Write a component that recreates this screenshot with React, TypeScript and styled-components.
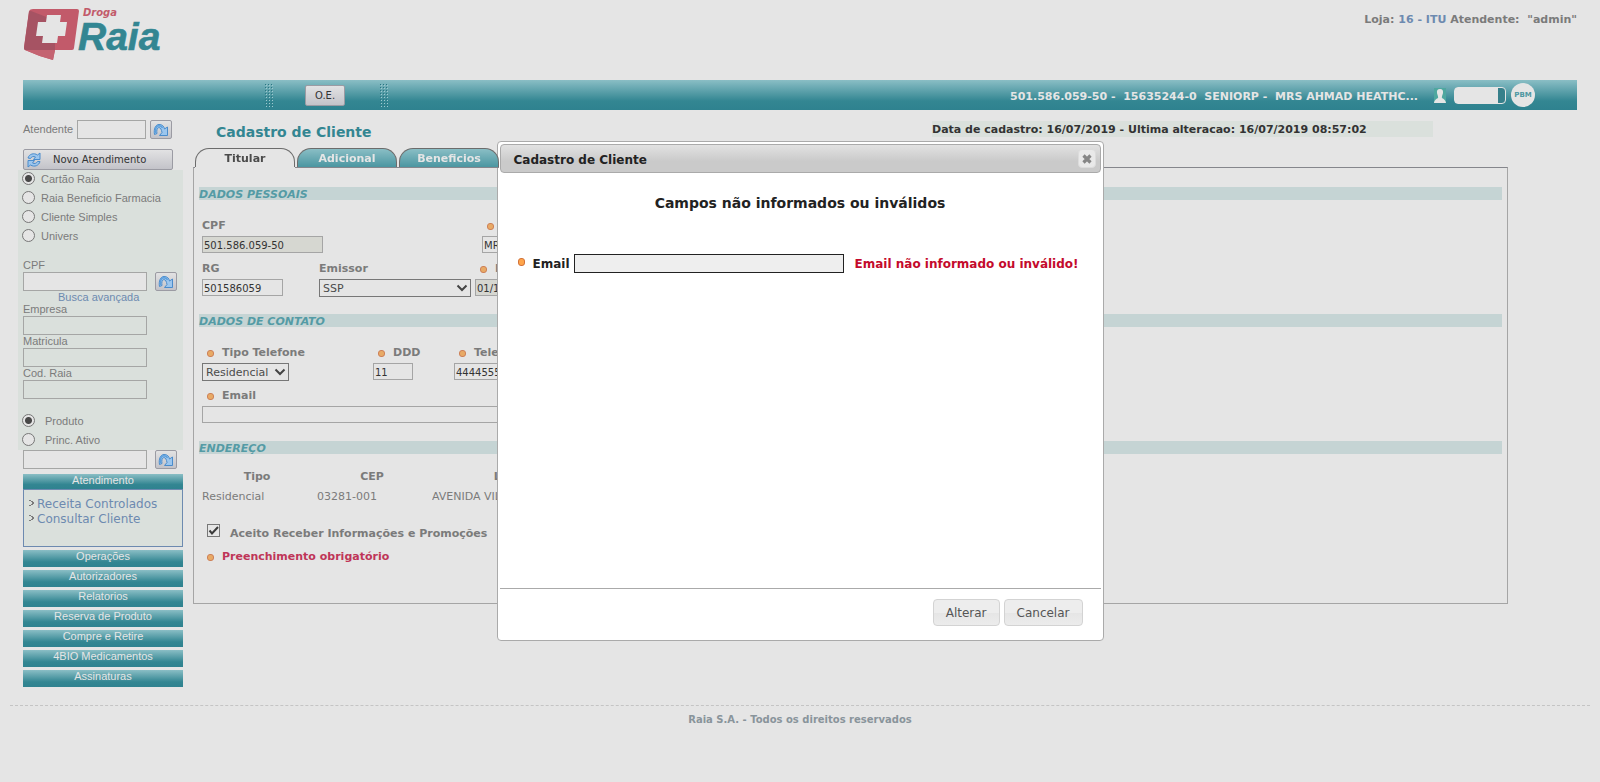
import React from "react";
import styled, { createGlobalStyle, css } from "styled-components";

const verdana = `Verdana, "DejaVu Sans", sans-serif`;
const arial = `"Liberation Sans", Arial, sans-serif`;
const tealGradient = "linear-gradient(#8abec5 0%, #338692 70%, #2f828f 100%)";
const buttonGradient = "linear-gradient(#e2e2e3, #c3c3c9)";

const GlobalStyle = createGlobalStyle`
  *, *::before, *::after { box-sizing: border-box; }
  body {
    margin: 0;
    background: #e5e5e5;
    color: #7b7b7b;
    font-family: ${verdana};
    font-size: 11px;
  }
  input, select, button { font-family: ${verdana}; margin: 0; border-radius: 0; }
  a { color: #6d8ab0; text-decoration: none; }
`;

/* ---------- header ---------- */

const Page = styled.div`
  display: flex;
  flex-direction: column;
`;

const Header = styled.header`
  display: flex;
  justify-content: space-between;
  align-items: flex-start;
  height: 80px;
  padding: 7px 23px 0;
`;

const StoreInfo = styled.p`
  margin: 0;
  padding-top: 6px;
  font-weight: bold;
  line-height: 14px;
  white-space: pre;
`;

const Toolbar = styled.div`
  display: flex;
  align-items: center;
  height: 30px;
  margin: 0 23px;
  padding: 0 42px 0 242px;
  background: ${tealGradient};
`;

const ToolButton = styled.button`
  width: 40px;
  height: 21px;
  margin: 0 35px 0 32px;
  padding: 0;
  border: 1px solid #9b9ba3;
  border-radius: 2px;
  background: ${buttonGradient};
  color: #333;
  font-size: 10px;
`;

const ToolStatus = styled.div`
  display: flex;
  align-items: center;
  margin-left: auto;
  color: #e5e5e5;
  font-weight: bold;
  white-space: pre;

  span { padding: 3px 16px 0 0; }
`;

const Meter = styled.div`
  width: 52px;
  height: 17px;
  margin: 0 5px 0 8px;
  border: 1px solid #e5e5e5;
  border-radius: 4px;
  background: linear-gradient(90deg, #e5e5e5 0 43px, #37808b 43px);
`;

const PbmBadge = styled.div`
  display: flex;
  align-items: center;
  justify-content: center;
  width: 24px;
  height: 24px;
  border-radius: 50%;
  background: #e5e5e5;
  color: #4f97a1;
  font-size: 7px;
`;

/* ---------- sidebar ---------- */

const Body = styled.div`
  display: flex;
  align-items: flex-start;
  gap: 10px;
  padding: 0 92px 0 18px;
`;

const Sidebar = styled.aside`
  flex: none;
  width: 165px;
  padding-top: 10px;
  font-family: ${arial};
`;

const SideRow = styled.div<{ $gap: number }>`
  display: flex;
  align-items: center;
  gap: ${(p) => p.$gap}px;
  padding-left: 5px;
`;

const SideLabel = styled.label`
  display: block;
  padding-left: 5px;
  line-height: 13px;
`;

const AttendantLabel = styled.label`
  width: 50px;
  line-height: 13px;
`;

const SideInput = styled.input<{ $width?: number; $clear?: boolean }>`
  display: block;
  width: ${(p) => p.$width ?? 124}px;
  height: 19px;
  padding: 0 3px;
  border: 1px solid #a5a6a5;
  background: ${(p) => (p.$clear ? "#e5e5e5" : "transparent")};
  font-size: 10px;
`;

const GoButton = styled.button`
  display: flex;
  align-items: center;
  justify-content: center;
  width: 22px;
  height: 19px;
  padding: 0;
  border: 1px solid #9b9ba3;
  border-radius: 2px;
  background: ${buttonGradient};
`;

const NewButton = styled.button`
  display: flex;
  align-items: center;
  width: 150px;
  height: 21px;
  margin: 10px 0 0 5px;
  padding: 0 0 0 2px;
  border: 1px solid #9b9ba3;
  border-radius: 2px;
  background: ${buttonGradient};
  color: #333;
  font-size: 10px;
  gap: 11px;
`;

const SearchPanel = styled.div`
  display: flex;
  flex-direction: column;
  gap: 13px;
  background: #dae0dc;
`;

const RadioLabel = styled.label<{ $gap: number }>`
  display: flex;
  align-items: center;
  gap: ${(p) => p.$gap}px;
  height: 19px;
  padding: 0 0 2px 4px;
`;

const Radio = styled.input`
  appearance: none;
  width: 13px;
  height: 13px;
  border: 1px solid #777;
  border-radius: 50%;
  background: #e5e5e5;

  &:checked { background: radial-gradient(circle, #484848 0 3px, #e5e5e5 4px); }
`;

const AdvancedLink = styled.a`
  display: block;
  padding-left: 40px;
  line-height: 12px;
`;

const Menu = styled.nav`
  display: flex;
  flex-direction: column;
  gap: 3px;
  padding: 5px 0 0 5px;
`;

const MenuButton = styled.button<{ $open?: boolean }>`
  display: block;
  flex: none;
  width: 100%;
  height: ${(p) => (p.$open ? 15 : 17)}px;
  padding: 0 0 4px;
  border: 0;
  background: ${tealGradient};
  color: #e5e5e5;
  font-family: ${arial};
  font-size: 11px;
  line-height: 13px;
`;

const SubMenu = styled.ul`
  height: 58px;
  margin: 0;
  padding: 7px 0 0 5px;
  border: 1px solid #6d8ab0;
  background: #dae0dc;
  font-family: ${verdana};
  font-size: 12px;
  line-height: 15px;
  list-style: none;

  li { display: flex; align-items: center; gap: 3px; white-space: nowrap; }
  svg { margin-bottom: 3px; }
`;

/* ---------- main form ---------- */

const Main = styled.main`
  flex: 1;
  min-width: 0;
`;

const TitleRow = styled.div`
  display: flex;
  justify-content: space-between;
  height: 38px;
  padding: 11px 75px 0 23px;
`;

const Title = styled.h1`
  margin: 0;
  color: #338692;
  font-size: 14px;
  line-height: 22px;
`;

const Dates = styled.p`
  width: 501px;
  height: 16px;
  margin: 0;
  background: #dae0dc;
  color: #333;
  font-weight: bold;
  line-height: 17px;
  white-space: nowrap;
`;

const Tabs = styled.div`
  display: flex;
  gap: 2px;
  padding-left: 2px;
`;

const Tab = styled.button<{ $active?: boolean }>`
  width: 100px;
  height: 19px;
  padding: 0;
  border: 1px solid #6c6c6c;
  border-bottom: 0;
  border-radius: 14px 14px 0 0;
  background: linear-gradient(#8abec5, #4b96a1);
  color: #e5e5e5;
  font-size: 11px;
  font-weight: bold;
  z-index: 1;
  box-shadow: 0 1px #85868c;

  ${(p) =>
    p.$active &&
    css`
      background: #e5e5e5;
      color: #4b4b4b;
      box-shadow: 0 1px #e5e5e5;
    `}
`;

const Sheet = styled.form`
  padding: 19px 5px 39px;
  border: 1px solid #a5a5a5;
  border-top-color: #85868c;
`;

const SectionTitle = styled.h2`
  height: 13px;
  margin: 0;
  background: #c5d4d4;
  color: #549ba5;
  font-size: 11px;
  font-style: italic;
  line-height: 15px;
`;

const Rows = styled.div`
  display: flex;
  flex-direction: column;
  gap: 8px;
  padding: 19px 3px 17px;
`;

const Row = styled.div<{ $columns: string }>`
  display: grid;
  grid-template-columns: ${(p) => p.$columns};
  min-height: 35px;
`;

const Field = styled.div`
  display: flex;
  flex-direction: column;
  align-items: flex-start;
  gap: 3px;
`;

const FieldLabel = styled.label<{ $required?: boolean }>`
  display: flex;
  align-items: center;
  gap: 8px;
  height: 14px;
  padding-left: ${(p) => (p.$required ? 5 : 0)}px;
  font-weight: bold;
  line-height: 14px;
  white-space: nowrap;
`;

const Dot = styled.span`
  flex: none;
  width: 7px;
  height: 7px;
  border: 1px solid #cd8058;
  border-radius: 3px;
  background: #e8aa66;
`;

const TextInput = styled.input<{ $width: number }>`
  width: ${(p) => p.$width}px;
  height: 17px;
  padding: 1px 1px 0;
  border: 1px solid #a5a5a5;
  background: #e5e5e5;
  color: #333;
  font-size: 10px;

  &:read-only { background: #d6d7d1; }
`;

const SelectBox = styled.div<{ $width: number }>`
  display: grid;
  width: ${(p) => p.$width}px;

  select, svg { grid-area: 1 / 1; }
  svg { justify-self: end; align-self: center; margin-right: 3px; pointer-events: none; }
`;

const Select = styled.select`
  appearance: none;
  width: 100%;
  height: 18px;
  padding: 1px 3px 0;
  border: 1px solid #777;
  background: #e5e5e5;
  color: #4b4b4b;
  font-size: 11px;
`;

const AddressTable = styled.table`
  margin: 13px 0 0 3px;
  border-collapse: collapse;
  table-layout: fixed;
  width: 430px;

  th, td { height: 20px; padding: 0 5px 0 0; line-height: 14px; white-space: nowrap; overflow: hidden; }
  td { text-align: left; }
`;

const ConsentLabel = styled.label`
  display: flex;
  align-items: center;
  gap: 10px;
  height: 16px;
  margin: 15px 0 0 8px;
  font-weight: bold;

  span { padding-top: 6px; }
`;

const Check = styled.input`
  appearance: none;
  width: 13px;
  height: 13px;
  border: 1px solid #777;
`;

const CheckBox = styled.div`
  display: grid;
  width: 13px;

  input, svg { grid-area: 1 / 1; }
  svg { pointer-events: none; }
`;

const RequiredNote = styled.p`
  display: flex;
  align-items: center;
  gap: 8px;
  margin: 12px 0 0 8px;
  color: #bf3558;
  font-weight: bold;
  line-height: 14px;
`;

const Footer = styled.footer`
  margin: 18px 10px 0;
  padding-top: 7px;
  border-top: 1px dashed #c4c4c4;
  color: #89949b;
  font-size: 10px;
  font-weight: bold;
  line-height: 13px;
  text-align: center;
`;

/* ---------- dialog ---------- */

const Overlay = styled.div`
  position: fixed;
  inset: 0;
  display: flex;
  justify-content: center;
  align-items: flex-start;
  padding-top: 141px;
`;

const Dialog = styled.section`
  display: flex;
  flex-direction: column;
  width: 607px;
  min-height: 500px;
  padding: 2px;
  border: 1px solid #aaa;
  border-radius: 4px;
  background: #fff;
  color: #222;
  font-size: 12px;
`;

const DialogBar = styled.header`
  display: flex;
  align-items: center;
  justify-content: space-between;
  height: 29px;
  padding: 0 4px 0 13px;
  border: 1px solid #aaa;
  border-radius: 4px;
  background: linear-gradient(#e2e2e2, #cacaca 60%, #cacaca);

  h2 { margin: 0; padding-top: 2px; font-size: 12px; }
`;

const CloseButton = styled.button`
  display: flex;
  align-items: center;
  justify-content: center;
  width: 18px;
  height: 19px;
  padding: 0;
  border: 1px solid #dcdcdc;
  border-radius: 4px;
  background: #e9e9e9;
`;

const DialogContent = styled.div`
  flex: 1;
  padding: 20px 16px 0;

  h3 { margin: 0 0 41px; font-size: 14px; line-height: 20px; text-align: center; }
`;

const EmailRow = styled.div`
  display: flex;
  align-items: center;
  height: 19px;
  padding-left: 2px;
  font-weight: bold;
  line-height: 14px;
  white-space: nowrap;

  label { padding: 1px 4px 0 8px; }
`;

const BrightDot = styled(Dot)`
  align-self: flex-start;
  margin-top: 4px;
  height: 8px;
  border-color: #d2723a;
  background: #ffa54a;
`;

const EmailInput = styled.input`
  width: 270px;
  height: 19px;
  border: 1px solid #222;
  background: #eee;
`;

const ErrorText = styled.span`
  padding: 1px 0 0 11px;
  color: #c40a2c;
`;

const DialogActions = styled.footer`
  display: flex;
  justify-content: flex-end;
  gap: 4px;
  padding: 10px 18px 12px;
  border-top: 1px solid #aaa;
`;

const DialogButton = styled.button`
  height: 27px;
  padding: 0 12px;
  border: 1px solid #d3d3d3;
  border-radius: 4px;
  background: linear-gradient(#ededed 50%, #e5e5e5 50%, #ececec);
  color: #555;
  font-size: 12px;
`;

/* ---------- drawings ---------- */

const Logo = () => (
  <svg width="140" height="54" viewBox="0 0 140 54" role="img" aria-label="Droga Raia">
    <path d="M10 2H54q2 0 2 2L51 41q0 2-2 2H32L30 53Q15 49 2 43Q1 42 1 40L6 4Q7 2 10 2Z" fill="#c25a6a" />
    <path d="M6 5Q6 4 8 4L26 11L32 36V43H2Q1 43 1 41Z" fill="#a65363" />
    <path d="M2 43H32L30 53Q15 49 2 43Z" fill="#c46371" />
    <path d="M24 8H38L37 15H44L42 29H35L34 36H19L20 29H13L15 15H23Z" fill="#e5e5e5" />
    <text x="60" y="9" fontFamily={verdana} fontSize="10" fontWeight="bold" fontStyle="italic" fill="#c25a6a">Droga</text>
    <text x="55" y="43" fontFamily={arial} fontSize="39" fontWeight="bold" fontStyle="italic" fill="#338692" stroke="#338692" strokeWidth="0.6">Raia</text>
  </svg>
);

const gripCells = Array.from({ length: 24 }, (_, i) => ({ x: (i % 3) * 3, y: Math.floor(i / 3) * 3 }));

const Grip = () => (
  <svg width="8" height="23" viewBox="0 0 8 23" shapeRendering="crispEdges" aria-hidden="true">
    {gripCells.map(({ x, y }) => (
      <React.Fragment key={`${x}-${y}`}>
        <rect x={x} y={y} width="1" height="1" fill="#2a7682" />
        <rect x={x + 1} y={y + 1} width="1" height="1" fill="#9fc9cf" />
      </React.Fragment>
    ))}
  </svg>
);

const GoIcon = () => (
  <svg width="16" height="14" viewBox="0 0 16 14" aria-hidden="true">
    <path d="M1.500 11.500C.5 6 2.500 1.500 6 1.500C9.500 1.500 11 3.500 11.500 6L14.500 4V12.500H6.500L9 9.500C8.500 6.500 7.500 4.500 5.800 4.600C3.800 4.800 3.500 8 4 10.500Z" fill="#9cc6ee" stroke="#4a8ccc" strokeLinejoin="round" />
    <path d="M2.300 10C2 5.500 3.200 2.800 6 2.800C7.800 2.800 9 3.800 9.500 5" fill="none" stroke="#5c9fdd" strokeWidth="1.500" />
  </svg>
);

const RefreshIcon = () => (
  <svg width="16" height="16" viewBox="0 0 16 16" aria-hidden="true">
    <path d="M2 6C3 2 8 .5 11.500 3L14 1V7.500H7.500L9.500 5C7.500 4 5.500 4.500 4.500 6.500Z" fill="#9cc6ee" stroke="#4a8ccc" strokeLinejoin="round" />
    <path d="M14 9.500C13 13.500 8.500 15.500 4.500 13L2 15V8.500H8.500L6.500 11C8.500 12 10.500 11.500 11.500 9.500Z" fill="#9cc6ee" stroke="#4a8ccc" strokeLinejoin="round" />
  </svg>
);

const PersonIcon = () => (
  <svg width="12" height="15" viewBox="0 0 12 15" aria-hidden="true">
    <rect width="12" height="15" fill="#4fa79f" />
    <path d="M6 1C8.500 1 9.300 2.500 9 5C8.800 6.500 8 7.500 7.800 9.500C8.500 11 11.500 11 12 15H0C.5 11 3.500 11 4.200 9.500C4 7.500 3.200 6.500 3 5C2.700 2.500 3.500 1 6 1Z" fill="#e5e5e5" />
  </svg>
);

const Bullet = () => (
  <svg width="5" height="6" viewBox="0 0 5 6" aria-hidden="true">
    <path d="M0 0H2V1H4V2H5V4H4V5H2V6H0V5H2V4H3V2H2V1H0Z" fill="#7b7b7b" />
  </svg>
);

const Chevron = () => (
  <svg width="12" height="8" viewBox="0 0 12 8" aria-hidden="true">
    <path d="M1.500 1.500L6 6L10.500 1.500" fill="none" stroke="#444" strokeWidth="2" />
  </svg>
);

const Tick = () => (
  <svg width="13" height="13" viewBox="0 0 13 13" aria-hidden="true">
    <path d="M2.500 6.500L5 9.500L11 3" fill="none" stroke="#3a3a3a" strokeWidth="2" />
  </svg>
);

const CloseIcon = () => (
  <svg width="10" height="10" viewBox="0 0 10 10" aria-hidden="true">
    <path d="M1.500 1.500L8.500 8.500M8.500 1.500L1.500 8.500" stroke="#868686" strokeWidth="3.200" />
  </svg>
);

/* ---------- pieces ---------- */

const customerTypes = ["Cartão Raia", "Raia Beneficio Farmacia", "Cliente Simples", "Univers"];
const closedMenus = [
  "Operações",
  "Autorizadores",
  "Relatorios",
  "Reserva de Produto",
  "Compre e Retire",
  "4BIO Medicamentos",
  "Assinaturas",
];

type FieldProps = { id: string; label: string; required?: boolean; children: React.ReactNode };

const FormField = ({ id, label, required, children }: FieldProps) => (
  <Field>
    <FieldLabel htmlFor={id} $required={required}>
      {required && <Dot />}
      {label}
    </FieldLabel>
    {children}
  </Field>
);

const Dropdown = ({ id, width, value }: { id: string; width: number; value: string }) => (
  <SelectBox $width={width}>
    <Select id={id} defaultValue={value}>
      <option>{value}</option>
    </Select>
    <Chevron />
  </SelectBox>
);

const SearchSidebar = () => (
  <Sidebar>
    <SideRow $gap={4}>
      <AttendantLabel htmlFor="atendente">Atendente</AttendantLabel>
      <SideInput id="atendente" $width={69} $clear />
      <GoButton type="button" aria-label="Buscar atendente"><GoIcon /></GoButton>
    </SideRow>
    <NewButton type="button"><RefreshIcon />Novo Atendimento</NewButton>
    <SearchPanel>
      <div>
        {customerTypes.map((type, i) => (
          <RadioLabel key={type} $gap={6}>
            <Radio type="radio" name="tipo" defaultChecked={i === 0} />
            {type}
          </RadioLabel>
        ))}
      </div>
      <div>
        <SideLabel htmlFor="busca-cpf">CPF</SideLabel>
        <SideRow $gap={8}>
          <SideInput id="busca-cpf" $clear />
          <GoButton type="button" aria-label="Buscar CPF"><GoIcon /></GoButton>
        </SideRow>
        <AdvancedLink href="#busca">Busca avançada</AdvancedLink>
        {["Empresa", "Matricula", "Cod. Raia"].map((name) => (
          <React.Fragment key={name}>
            <SideLabel htmlFor={name}>{name}</SideLabel>
            <SideRow $gap={0}><SideInput id={name} /></SideRow>
          </React.Fragment>
        ))}
      </div>
      <div>
        <RadioLabel $gap={10}><Radio type="radio" name="busca" defaultChecked />Produto</RadioLabel>
        <RadioLabel $gap={10}><Radio type="radio" name="busca" />Princ. Ativo</RadioLabel>
      </div>
    </SearchPanel>
    <SideRow $gap={8}>
      <SideInput aria-label="Produto" $clear />
      <GoButton type="button" aria-label="Buscar produto"><GoIcon /></GoButton>
    </SideRow>
    <Menu>
      <div>
        <MenuButton type="button" $open>Atendimento</MenuButton>
        <SubMenu>
          <li><Bullet /><a href="#receita">Receita Controlados</a></li>
          <li><Bullet /><a href="#consultar">Consultar Cliente</a></li>
        </SubMenu>
      </div>
      {closedMenus.map((name) => (
        <MenuButton key={name} type="button">{name}</MenuButton>
      ))}
    </Menu>
  </Sidebar>
);

const CustomerForm = () => (
  <Sheet>
    <SectionTitle>DADOS PESSOAIS</SectionTitle>
    <Rows>
      <Row $columns="280px 1fr">
        <FormField id="cpf" label="CPF"><TextInput id="cpf" $width={121} defaultValue="501.586.059-50" readOnly /></FormField>
        <FormField id="nome" label="Nome" required><TextInput id="nome" $width={300} defaultValue="MRS AHMAD" /></FormField>
      </Row>
      <Row $columns="117px 156px 1fr">
        <FormField id="rg" label="RG"><TextInput id="rg" $width={81} defaultValue="501586059" /></FormField>
        <FormField id="emissor" label="Emissor"><Dropdown id="emissor" width={152} value="SSP" /></FormField>
        <FormField id="nascimento" label="Nasc" required>
          <TextInput id="nascimento" $width={80} defaultValue="01/10/1980" readOnly />
        </FormField>
      </Row>
    </Rows>
    <SectionTitle>DADOS DE CONTATO</SectionTitle>
    <Rows>
      <Row $columns="171px 81px 1fr">
        <FormField id="tipo-telefone" label="Tipo Telefone" required>
          <Dropdown id="tipo-telefone" width={87} value="Residencial" />
        </FormField>
        <FormField id="ddd" label="DDD" required><TextInput id="ddd" $width={40} defaultValue="11" /></FormField>
        <FormField id="telefone" label="Telefone" required><TextInput id="telefone" $width={90} defaultValue="44445555" /></FormField>
      </Row>
      <Row $columns="1fr">
        <FormField id="email" label="Email" required><TextInput id="email" $width={400} /></FormField>
      </Row>
    </Rows>
    <SectionTitle>ENDEREÇO</SectionTitle>
    <AddressTable>
      <colgroup><col width="115" /><col width="115" /><col /></colgroup>
      <thead><tr><th>Tipo</th><th>CEP</th><th>Logradouro</th></tr></thead>
      <tbody><tr><td>Residencial</td><td>03281-001</td><td>AVENIDA VILA</td></tr></tbody>
    </AddressTable>
    <ConsentLabel>
      <CheckBox><Check type="checkbox" defaultChecked /><Tick /></CheckBox>
      <span>Aceito Receber Informações e Promoções</span>
    </ConsentLabel>
    <RequiredNote><Dot />Preenchimento obrigatório</RequiredNote>
  </Sheet>
);

const InvalidFieldsDialog = () => (
  <Overlay>
    <Dialog role="dialog" aria-modal="true" aria-labelledby="dialog-title">
      <DialogBar>
        <h2 id="dialog-title">Cadastro de Cliente</h2>
        <CloseButton type="button" aria-label="Fechar"><CloseIcon /></CloseButton>
      </DialogBar>
      <DialogContent>
        <h3>Campos não informados ou inválidos</h3>
        <EmailRow>
          <BrightDot />
          <label htmlFor="dialog-email">Email</label>
          <EmailInput id="dialog-email" />
          <ErrorText>Email não informado ou inválido!</ErrorText>
        </EmailRow>
      </DialogContent>
      <DialogActions>
        <DialogButton type="button">Alterar</DialogButton>
        <DialogButton type="button">Cancelar</DialogButton>
      </DialogActions>
    </Dialog>
  </Overlay>
);

export default function App() {
  return (
    <>
      <GlobalStyle />
      <Page>
        <Header>
          <Logo />
          <StoreInfo>Loja: <a href="#loja">16 - ITU</a> Atendente:  "admin"</StoreInfo>
        </Header>
        <Toolbar>
          <Grip />
          <ToolButton type="button">O.E.</ToolButton>
          <Grip />
          <ToolStatus>
            <span>{"501.586.059-50 -  15635244-0  SENIORP -  MRS AHMAD HEATHC..."}</span>
            <PersonIcon />
            <Meter />
            <PbmBadge>PBM</PbmBadge>
          </ToolStatus>
        </Toolbar>
        <Body>
          <SearchSidebar />
          <Main>
            <TitleRow>
              <Title>Cadastro de Cliente</Title>
              <Dates>Data de cadastro: 16/07/2019 - Ultima alteracao: 16/07/2019 08:57:02</Dates>
            </TitleRow>
            <Tabs>
              <Tab type="button" $active>Titular</Tab>
              <Tab type="button">Adicional</Tab>
              <Tab type="button">Beneficios</Tab>
            </Tabs>
            <CustomerForm />
          </Main>
        </Body>
        <Footer>Raia S.A. - Todos os direitos reservados</Footer>
      </Page>
      <InvalidFieldsDialog />
    </>
  );
}
